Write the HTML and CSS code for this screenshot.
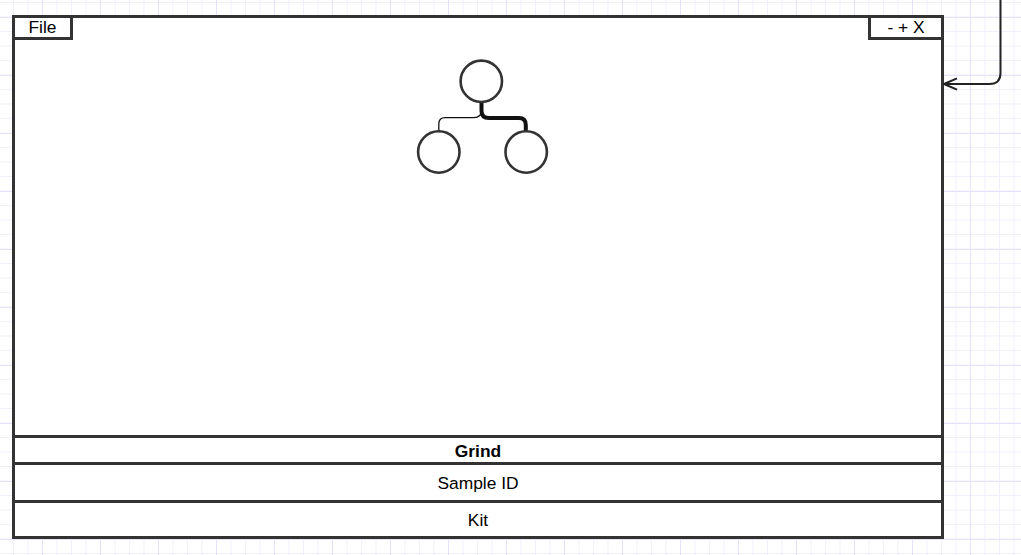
FILE: index.html
```html
<!DOCTYPE html>
<html lang="en">
<head>
  <meta charset="UTF-8">
  <meta name="viewport" content="width=device-width, initial-scale=1.0">
  <title>Grind</title>
  <link rel="stylesheet" href="styles.css">
</head>
<body>
  <div class="canvas">
    <div class="window">
      <div class="titlebar">
        <div class="tab tab-file">File</div>
        <div class="tab tab-controls">- + X</div>
      </div>
      <div class="stage">
        <svg class="tree" width="140" height="125" viewBox="0 0 140 125">
          <path class="edge-thin" d="M68.5 55 Q68.5 62.7 61 62.7 H32 Q25.8 62.7 25.8 69 V76" />
          <path class="edge-thick" d="M68.5 47 V56 Q68.5 63 76 63 H106 Q112.8 63 112.8 70 V76" />
          <circle class="node" cx="68.3" cy="26.3" r="20.7" />
          <circle class="node" cx="25.8" cy="97" r="20.7" />
          <circle class="node" cx="113.2" cy="97" r="20.7" />
        </svg>
      </div>
      <div class="row row-title">Grind</div>
      <div class="row row-sample">Sample ID</div>
      <div class="row row-kit">Kit</div>
    </div>

    <!-- connector coming in from off screen -->
    <svg class="link-arrow" width="91" height="100" viewBox="0 0 91 100">
      <path d="M70.5 0 V73 Q70.5 84 59.5 84 H14" />
      <path d="M27 78.3 L14 84 L27 89.7" />
    </svg>
  </div>
</body>
</html>
```

FILE: styles.css
```css
* {
  box-sizing: border-box;
}

body {
  margin: 0;
  font-family: "Liberation Sans", Arial, sans-serif;
  font-size: 17.4px;
  color: #000;
  overflow: hidden;
}

/* diagram paper with minor + major grid lines */
.canvas {
  position: relative;
  width: 1021px;
  height: 555px;
  padding: 15px 0 0 12px;
  background-color: #fff;
  background-image:
    linear-gradient(to right, #e6e2f9 1px, transparent 1px),
    linear-gradient(to bottom, #e6e2f9 1px, transparent 1px),
    linear-gradient(to right, #f1effc 1px, transparent 1px),
    linear-gradient(to bottom, #f1effc 1px, transparent 1px);
  background-size: 58px 58px, 58px 58px, 14.5px 14.5px, 14.5px 14.5px;
  background-position: 42px 0, 0 17px, 13px 0, 0 2px;
}

.window {
  width: 932px;
  height: 524px;
  border: 3px solid #333;
  background: #fff;
  display: flex;
  flex-direction: column;
}

.titlebar {
  display: flex;
  justify-content: space-between;
  height: 22px;
}

.tab {
  height: 22px;
  padding-top: 1px;
  border-bottom: 3px solid #333;
  display: flex;
  align-items: center;
  justify-content: center;
  line-height: 1;
}

.tab-file {
  width: 58px;
  border-right: 3px solid #333;
}

.tab-controls {
  width: 73px;
  border-left: 3px solid #333;
}

.stage {
  flex: 1;
  display: flex;
  justify-content: center;
  align-items: flex-start;
  padding-top: 15px;
}

.tree {
  margin-left: 10px;
}

.node {
  fill: #fff;
  stroke: #333;
  stroke-width: 2.6;
}

.edge-thin {
  fill: none;
  stroke: #111;
  stroke-width: 1.3;
}

.edge-thick {
  fill: none;
  stroke: #111;
  stroke-width: 4;
}

.row {
  border-top: 3px solid #333;
  padding-top: 2px;
  display: flex;
  align-items: center;
  justify-content: center;
}

.row-title {
  height: 27px;
  font-weight: bold;
}

.row-sample {
  height: 38px;
}

.row-kit {
  height: 36px;
}

.link-arrow {
  position: absolute;
  top: 0;
  left: 930px;
}

.link-arrow path {
  fill: none;
  stroke: #222;
  stroke-width: 2;
  stroke-linejoin: round;
}
```
